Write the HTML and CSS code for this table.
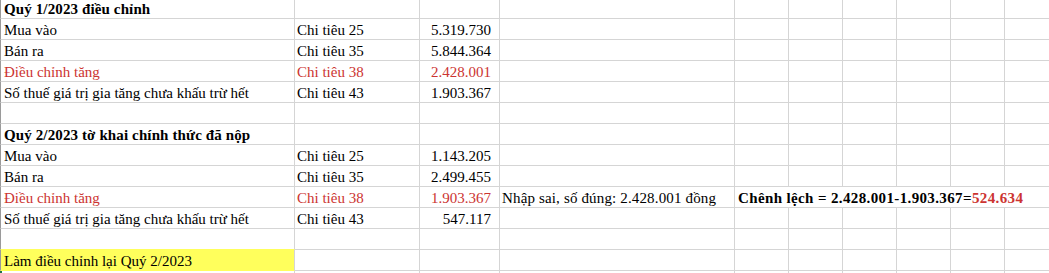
FILE: index.html
```html
<!DOCTYPE html>
<html lang="vi">
<head>
<meta charset="utf-8">
<title>Điều chỉnh thuế GTGT</title>
<link rel="stylesheet" href="styles.css">
</head>
<body>
<div class="sheet">
  <!-- row 1 -->
  <div class="c a first b">Quý 1/2023 điều chỉnh</div><div class="c first"></div><div class="c first"></div><div class="c first"></div><div class="c first"></div><div class="c first"></div><div class="c first"></div><div class="c first"></div><div class="c first"></div><div class="c first"></div>
  <!-- row 2 -->
  <div class="c a">Mua vào</div><div class="c">Chi tiêu 25</div><div class="c num">5.319.730</div><div class="c"></div><div class="c"></div><div class="c"></div><div class="c"></div><div class="c"></div><div class="c"></div><div class="c"></div>
  <!-- row 3 -->
  <div class="c a">Bán ra</div><div class="c">Chi tiêu 35</div><div class="c num">5.844.364</div><div class="c"></div><div class="c"></div><div class="c"></div><div class="c"></div><div class="c"></div><div class="c"></div><div class="c"></div>
  <!-- row 4 -->
  <div class="c a red">Điều chỉnh tăng</div><div class="c red">Chi tiêu 38</div><div class="c num red">2.428.001</div><div class="c"></div><div class="c"></div><div class="c"></div><div class="c"></div><div class="c"></div><div class="c"></div><div class="c"></div>
  <!-- row 5 -->
  <div class="c a">Số thuế giá trị gia tăng chưa khấu trừ hết</div><div class="c">Chi tiêu 43</div><div class="c num">1.903.367</div><div class="c"></div><div class="c"></div><div class="c"></div><div class="c"></div><div class="c"></div><div class="c"></div><div class="c"></div>
  <!-- row 6 -->
  <div class="c a"></div><div class="c"></div><div class="c"></div><div class="c"></div><div class="c"></div><div class="c"></div><div class="c"></div><div class="c"></div><div class="c"></div><div class="c"></div>
  <!-- row 7 -->
  <div class="c a b">Quý 2/2023 tờ khai chính thức đã nộp</div><div class="c"></div><div class="c"></div><div class="c"></div><div class="c"></div><div class="c"></div><div class="c"></div><div class="c"></div><div class="c"></div><div class="c"></div>
  <!-- row 8 -->
  <div class="c a">Mua vào</div><div class="c">Chi tiêu 25</div><div class="c num">1.143.205</div><div class="c"></div><div class="c"></div><div class="c"></div><div class="c"></div><div class="c"></div><div class="c"></div><div class="c"></div>
  <!-- row 9 -->
  <div class="c a">Bán ra</div><div class="c">Chi tiêu 35</div><div class="c num">2.499.455</div><div class="c"></div><div class="c"></div><div class="c"></div><div class="c"></div><div class="c"></div><div class="c"></div><div class="c"></div>
  <!-- row 10 -->
  <div class="c a red">Điều chỉnh tăng</div><div class="c red">Chi tiêu 38</div><div class="c num red">1.903.367</div><div class="c note">Nhập sai, số đúng: 2.428.001 đồng</div><div class="c b span">Chênh lệch = 2.428.001-1.903.367=<span class="red">524.634</span></div>
  <!-- row 11 -->
  <div class="c a">Số thuế giá trị gia tăng chưa khấu trừ hết</div><div class="c">Chi tiêu 43</div><div class="c num">547.117</div><div class="c"></div><div class="c"></div><div class="c"></div><div class="c"></div><div class="c"></div><div class="c"></div><div class="c"></div>
  <!-- row 12 -->
  <div class="c a above-hl"></div><div class="c"></div><div class="c"></div><div class="c"></div><div class="c"></div><div class="c"></div><div class="c"></div><div class="c"></div><div class="c"></div><div class="c"></div>
  <!-- row 13 -->
  <div class="c a hl">Làm điều chỉnh lại Quý 2/2023</div><div class="c"></div><div class="c"></div><div class="c"></div><div class="c"></div><div class="c"></div><div class="c"></div><div class="c"></div><div class="c"></div><div class="c"></div>
  <!-- row 14 -->
  <div class="c a sel"></div><div class="c"></div><div class="c"></div><div class="c"></div><div class="c"></div><div class="c"></div><div class="c"></div><div class="c"></div><div class="c"></div><div class="c"></div>
</div>
</body>
</html>
```
FILE: styles.css
```css
html, body {
  margin: 0;
  padding: 0;
  background: #ffffff;
  overflow: hidden;
}

.sheet {
  display: grid;
  grid-template-columns: 295px 125px 80px 235px 54px 54px 54px 54px 54px 54px;
  grid-template-rows: 19px;
  grid-auto-rows: 21px;
  width: 1059px;
  font-family: "Liberation Serif", "Times New Roman", serif;
  font-size: 15px;
  color: #000000;
}

.c {
  box-sizing: border-box;
  border-right: 1px solid #d5d5d5;
  border-bottom: 1px solid #d5d5d5;
  padding: 1px 2px 0 2px;
  line-height: 20px;
  white-space: nowrap;
  overflow: visible;
}

.c.first {
  padding-top: 0;
  line-height: 18px;
}

.c.a {
  border-left: 1px solid #9a9a9a;
  padding-left: 3px;
}

.c.num {
  text-align: right;
  padding-right: 8px;
}

.c.note {
  letter-spacing: 0.15px;
}

.b {
  font-weight: bold;
  letter-spacing: 0.12px;
}

.red {
  color: #cc3431;
}

.c.span {
  grid-column: span 6;
  border-right: none;
  padding-left: 3px;
  letter-spacing: 0.37px;
}

.c.hl {
  background: #ffff5c;
  border-bottom-color: #ffff5c;
}

.c.above-hl {
  border-bottom-color: #ffff5c;
}

.c.sel {
  border-left: 2px solid #217346;
}
```
